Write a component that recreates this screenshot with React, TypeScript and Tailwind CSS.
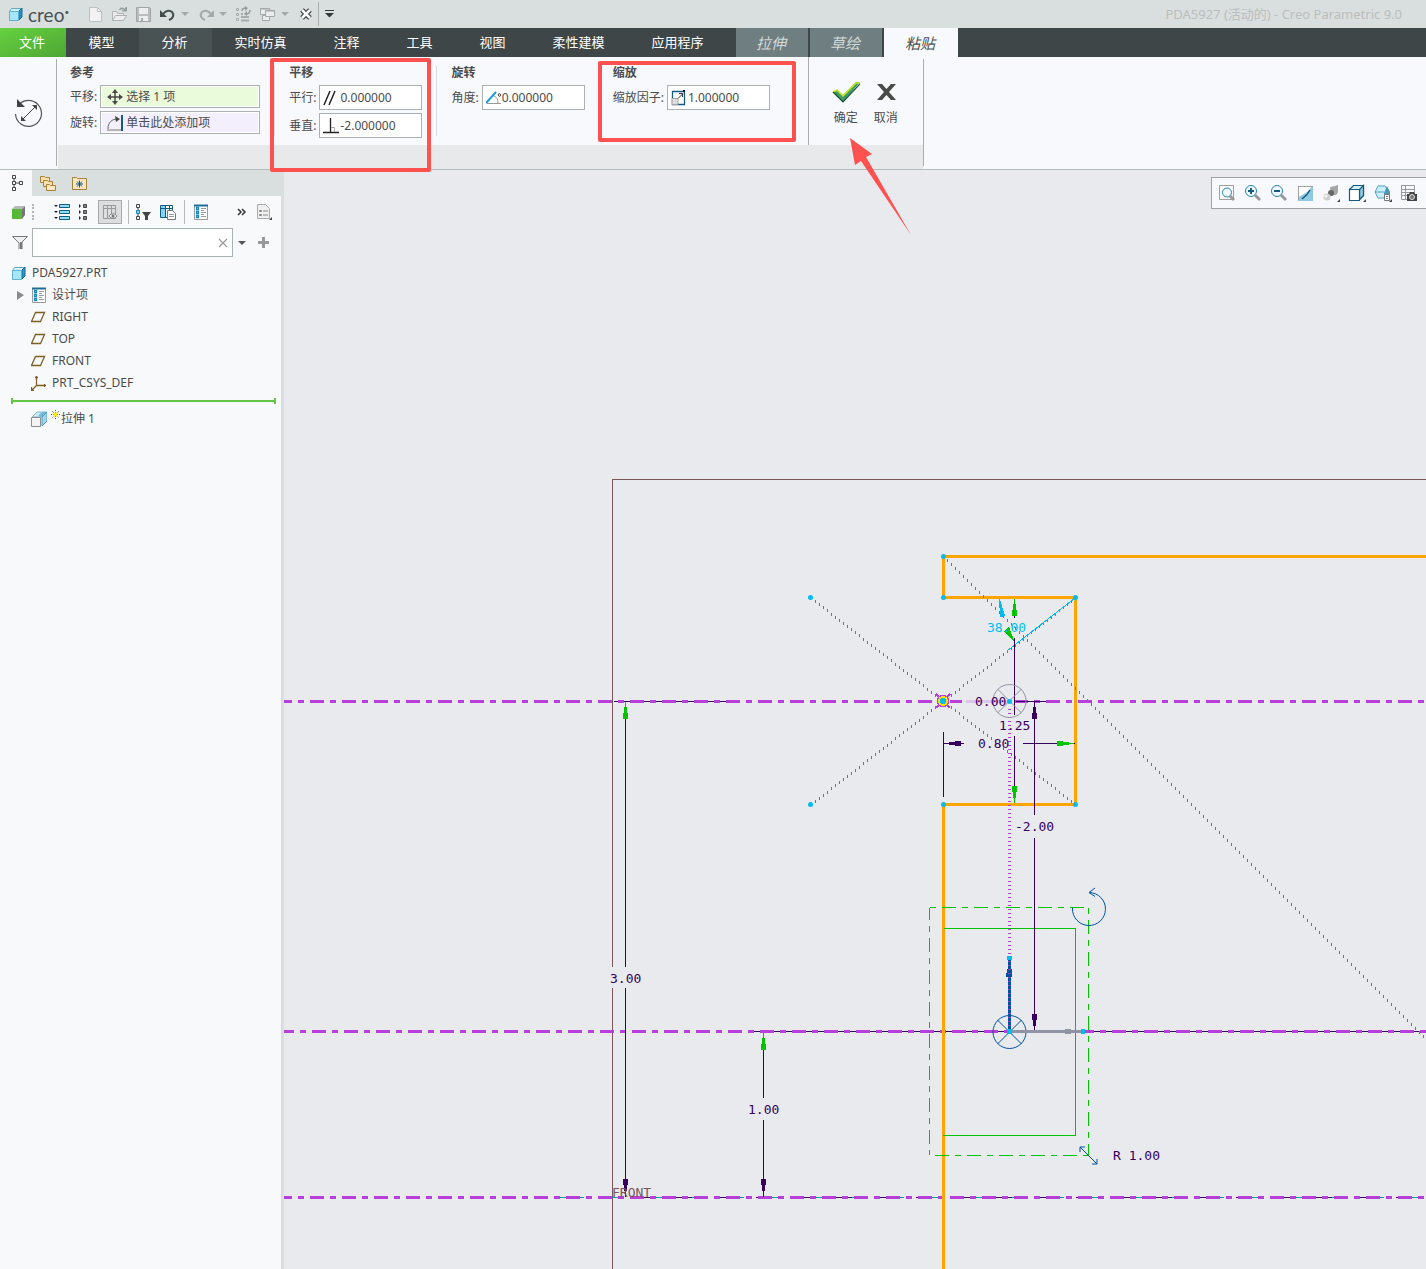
import React from "react";

interface IconProps {
  children: React.ReactNode;
  size?: number;
  className?: string;
}

const Icon: React.FC<IconProps> = ({ children, size = 16, className = "" }) => (
  <svg
    width={size}
    height={size}
    viewBox={`0 0 ${size} ${size}`}
    fill="none"
    aria-hidden="true"
    className={`shrink-0 ${className}`}
  >
    {children}
  </svg>
);

const Caret: React.FC<{ color?: string }> = ({ color = "#a3a8a8" }) => (
  <Icon size={10}>
    <path d="M1 3h8L5 7z" fill={color} />
  </Icon>
);

const PartIcon = () => (
  <Icon>
    <path d="M2.500 5.500l2-3h10l-2 3z" fill="#d5f3fd" stroke="#5fa9c9" />
    <path d="M12 5l3-3v9l-3 3z" fill="#2f93c4" stroke="#1d6a92" />
    <path d="M2.500 5.500h9v9h-9z" fill="#a6e6fb" stroke="#5fb0d2" />
  </Icon>
);

const DesignItemsIcon = () => (
  <Icon>
    <path d="M1.500 1.500h13v14h-13z" fill="#fff" stroke="#9b9b9b" />
    <path d="M1 1.500h14" stroke="#1d6f99" strokeWidth="2" />
    <path d="M3.500 3.500h2v2h-2zM3.500 7.500h2v2h-2zM3.500 11.500h2v2h-2z" stroke="#1788bd" strokeWidth="1.300" />
    <path d="M8 4.500h5M8 6.500h3M8 8.500h5M8 10.500h3M8 12.500h5" stroke="#9b9b9b" />
  </Icon>
);

const PlaneIcon = () => (
  <Icon>
    <path d="M4.500 3.500h9l-4 9h-9z" stroke="#7d6127" strokeWidth="1.300" />
  </Icon>
);

const CsysIcon = () => (
  <Icon>
    <path d="M5.500 1v9.500H15M5.500 10.500L1 15M4 2.500h3M13.500 9v3M.500 12v3.500H3" stroke="#7d6127" strokeWidth="1.300" />
  </Icon>
);

const ExtrudeIcon = () => (
  <Icon>
    <path d="M1 6l5-5h10l-5 5z" fill="#cfeaf6" stroke="#8ab7cc" />
    <path d="M7 5l4-4h5v8l-5 5V6z" fill="#6fb9da" />
    <path d="M11 6l5-5v9l-5 5z" fill="#a5d5ea" stroke="#4a9cc0" />
    <path d="M.500 6.500h9v9h-9z" fill="#f4f4f4" stroke="#8f8f8f" />
  </Icon>
);

const quickIcon = {
  file: (
    <Icon>
      <path d="M1.500 1.500h8l4 4v10h-12z" fill="#f2f2f2" stroke="#bcc0c0" />
      <path d="M9.500 1.500v4h4" stroke="#bcc0c0" />
    </Icon>
  ),
  open: (
    <Icon>
      <path d="M.500 14.500v-9h4l1 2h6v2M.500 14.500l3-5h11l-3 5z" fill="#ececec" stroke="#b0b4b4" />
      <path d="M7 4c1-2 3-3 5-1M14.500 1v4h-4z" stroke="#989c9c" fill="#989c9c" />
    </Icon>
  ),
  save: (
    <Icon>
      <path d="M.500 1.500h13l1 1v13H.500z" fill="#b9bdbd" stroke="#a0a5a5" />
      <path d="M3 2h9v6H3zM3 10h9v5H3z" fill="#eceeee" />
      <path d="M5 12h2v3H5z" fill="#a6abab" />
    </Icon>
  ),
  undo: (
    <Icon>
      <path d="M3 8c3-4 7-4 9-2s2 6-3 8" stroke="#444c4d" strokeWidth="2" />
      <path d="M0 4v7h7z" fill="#444c4d" />
    </Icon>
  ),
  redo: (
    <Icon>
      <path d="M13 8C10 4 6 4 4 6s-2 6 3 8" stroke="#a3a8a8" strokeWidth="2" />
      <path d="M16 4v7H9z" fill="#a3a8a8" />
    </Icon>
  ),
  regenerate: (
    <Icon>
      <path d="M.500 2.500h2v2h-2zM.500 7.500h2v2h-2zM.500 12.500h2v2h-2z" stroke="#a8acac" />
      <path d="M5 11h8M5 14.500h8M5 8h2" stroke="#a8acac" strokeWidth="2" />
      <path d="M6 5c0-2 1-3 4-3M14 4c0 2-1 4-4 4" stroke="#969b9b" strokeWidth="1.500" />
      <path d="M9 0l3 2-3 3zM11 5l-3 3 3 2z" fill="#969b9b" />
    </Icon>
  ),
  windows: (
    <Icon>
      <path d="M.5 2.500h9v6h-9z" fill="#eceeee" stroke="#a3a8a8" />
      <path d="M2.500 9.500h7v5h-7z" fill="#eceeee" stroke="#a3a8a8" />
      <path d="M5.500 4.500h9v6h-9z" fill="#eceeee" stroke="#a3a8a8" />
      <path d="M0 3h10M5 5h10" stroke="#a3a8a8" />
    </Icon>
  ),
  close: (
    <Icon>
      <path d="M4 4l8 8M12 4l-8 8" stroke="#3c4142" strokeWidth="5" />
      <path d="M4 4l8 8M12 4l-8 8" stroke="#fff" strokeWidth="2.500" />
    </Icon>
  ),
};

const QuickButton: React.FC<{ label: string; children: React.ReactNode }> = ({ label, children }) => (
  <button type="button" aria-label={label} className="flex items-center gap-1">
    {children}
  </button>
);

const TitleBar = () => (
  <header className="flex h-7 items-center bg-[#d9dfdf] pl-[7px]">
    <PartIcon />
    <span className="ml-[5px] w-[60px] font-['Lato',sans-serif] text-[19px] leading-none text-[#4b5152]">
      creo<span className="align-super text-[8px]">•</span>
    </span>
    <div className="flex items-center gap-2">
      <QuickButton label="新建">{quickIcon.file}</QuickButton>
      <QuickButton label="打开">{quickIcon.open}</QuickButton>
      <QuickButton label="保存">{quickIcon.save}</QuickButton>
      <QuickButton label="撤消">
        {quickIcon.undo}
        <Caret />
      </QuickButton>
      <QuickButton label="重做">
        {quickIcon.redo}
        <Caret />
      </QuickButton>
      <QuickButton label="重新生成">{quickIcon.regenerate}</QuickButton>
      <QuickButton label="窗口">
        {quickIcon.windows}
        <Caret />
      </QuickButton>
      <div className="flex items-center gap-1">
        <QuickButton label="关闭">{quickIcon.close}</QuickButton>
        <span className="h-6 w-px bg-[#a9afaf]" />
        <QuickButton label="自定义">
          <Icon size={12}>
            <path d="M2 2.500h9" stroke="#33393a" />
            <path d="M2 5h9L6.500 9.500z" fill="#33393a" />
          </Icon>
        </QuickButton>
      </div>
    </div>
    <h1 className="ml-auto pt-px pr-6 text-[13px] text-[#b9bebe]">PDA5927 (活动的) - Creo Parametric 9.0</h1>
  </header>
);

const tabs = [
  { name: "文件", style: "w-[66px] bg-linear-to-br from-[#66d140] to-[#4ea633]" },
  { name: "模型", style: "w-[73px]" },
  { name: "分析", style: "w-[73px] bg-[#4a5354]" },
  { name: "实时仿真", style: "w-[99px]" },
  { name: "注释", style: "w-[73px]" },
  { name: "工具", style: "w-[73px]" },
  { name: "视图", style: "w-[73px]" },
  { name: "柔性建模", style: "w-[99px]" },
  { name: "应用程序", style: "w-[99px]" },
  { name: "拉伸", style: "ml-2 w-[72px] bg-[#6f7e80] italic text-[#d3dada] text-[15px]" },
  { name: "草绘", style: "ml-[2px] w-[72px] bg-[#6f7e80] italic text-[#d3dada] text-[15px]" },
  { name: "粘贴", style: "ml-[2px] w-[74px] bg-[#f8f9fc] italic text-[#4b5152] text-[15px]" },
];

const TabBar = () => (
  <nav className="flex h-[29px] bg-[#3e4647] text-[13px] text-white">
    {tabs.map((tab) => (
      <button key={tab.name} type="button" className={`shrink-0 pr-[2px] ${tab.style}`}>
        {tab.name}
      </button>
    ))}
  </nav>
);

interface FieldProps {
  id: string;
  label: string;
  value: string;
  icon: React.ReactNode;
  box?: string;
}

const Field: React.FC<FieldProps> = ({ id, label, value, icon, box = "h-[25px] w-[103px] bg-white pl-[3px]" }) => (
  <div className="flex items-center gap-[3px]">
    <label htmlFor={id} className="whitespace-nowrap">
      {label}
    </label>
    <div className={`flex items-center border border-[#abb0b0] ${box}`}>
      {icon}
      <input id={id} defaultValue={value} className="w-full min-w-0 bg-transparent outline-none" />
    </div>
  </div>
);

const Separator = () => <span className="mt-[9px] h-[70px] w-px shrink-0 bg-[#d9dcdf]" />;

const Group: React.FC<{ title: string; children: React.ReactNode }> = ({ title, children }) => (
  <section className="px-[14px] pt-[7px]">
    <h2 className="mb-[3px] h-[18px] leading-[18px] font-bold">{title}</h2>
    <div className="flex flex-col gap-[3px]">{children}</div>
  </section>
);

const Ribbon = () => (
  <div className="flex h-[113px] border-b border-[#b3bcbc] bg-[#f8f9fc]">
    <div className="flex w-14 shrink-0 items-center justify-center">
      <Icon size={30}>
        <path d="M7 5.500A13 13 0 1 1 2.500 16" stroke="#555" strokeWidth="1.200" />
        <path d="M4 1v8h8z" fill="#444" />
        <path d="M10 21L22 9" stroke="#444" />
        <path d="M8 23v-5l5 5zM24 7h-5l5 5z" fill="#444" />
      </Icon>
    </div>
    <span className="mt-[2px] h-[107px] w-px shrink-0 bg-[#a9afaf]" />
    <div className="ml-px flex flex-col bg-[#e8e9eb]">
      <div className="flex h-[88px] bg-[#f8f9fc]">
        <div className="-ml-[2px] flex">
          <Group title="参考">
            <Field
              id="ref-translate"
              label="平移:"
              value="选择 1 项"
              box="h-[23px] w-40 bg-[#eafbdc] pl-[6px] shadow-[inset_0_0_0_1px_#fff]"
              icon={
                <Icon className="mr-[3px]">
                  <path d="M8 2v12M2 8h12" stroke="#4a4a4a" strokeWidth="1.500" />
                  <path d="M8 0l3 4H5zM8 16l3-4H5zM0 8l4-3v6zM16 8l-4-3v6z" fill="#4a4a4a" />
                </Icon>
              }
            />
            <Field
              id="ref-rotate"
              label="旋转:"
              value="单击此处添加项"
              box="h-[23px] w-40 bg-[#f3effd] pl-[6px] shadow-[inset_0_0_0_1px_#fff]"
              icon={
                <Icon className="mr-[3px]">
                  <path d="M1 14c0-7 4-10 10-10" stroke="#666" />
                  <path d="M8 1l5 3-4 3z" fill="#444" />
                  <path d="M0 15h14" stroke="#b5b5b5" strokeWidth="2" />
                  <path d="M15 0v16" stroke="#145b80" strokeWidth="2" />
                </Icon>
              }
            />
          </Group>
        </div>
        <Separator />
        <Group title="平移">
          <Field
            id="parallel"
            label="平行:"
            value="0.000000"
            icon={
              <Icon className="mr-px">
                <path d="M1 15L7 1M6 15l6-14" stroke="#222" strokeWidth="1.500" />
              </Icon>
            }
          />
          <Field
            id="vertical"
            label="垂直:"
            value="-2.000000"
            icon={
              <Icon className="mr-px">
                <path d="M7.500 0v15M0 14.500h16" stroke="#222" strokeWidth="1.300" />
                <path d="M8 9.500h3.500V14" stroke="#aaa" />
              </Icon>
            }
          />
        </Group>
        <Separator />
        <Group title="旋转">
          <Field
            id="angle"
            label="角度:"
            value="0.000000"
            icon={
              <Icon>
                <path d="M1 13.500h14M8 6c3 1 4 4 4 7" stroke="#999" />
                <path d="M0 13L10 2" stroke="#1f9ad6" strokeWidth="2" />
                <circle cx="13.500" cy="5" r="1.300" stroke="#444" />
              </Icon>
            }
          />
        </Group>
        <Group title="缩放">
          <Field
            id="scale"
            label="缩放因子:"
            value="1.000000"
            icon={
              <Icon className="mr-px">
                <path d="M1.500 1.500h12v13h-12z" fill="#fff" stroke="#145b80" strokeWidth="1.300" />
                <path d="M1 8.500h6v6H1z" fill="#ddd" stroke="#a5a5a5" />
                <path d="M7 8.500l5-5" stroke="#333" />
                <path d="M8 3.500h3.500V7" stroke="#333" />
                <path d="M12 0h2v2h-2z" fill="#111" />
              </Icon>
            }
          />
        </Group>
        <div className="ml-6 flex border-l border-[#a9afaf] pt-[22px] pr-[17px] pl-[17px]">
          <button type="button" className="flex w-10 flex-col items-center gap-[3px]">
            <Icon size={28}>
              <path d="M1 13l4-2 6 5L24 3h4L11 23z" fill="#3c9d66" />
              <path d="M1 13l4-2 6 6L24 4h4" stroke="#c9e81c" strokeWidth="1.500" />
              <path d="M1 13l10 10L28 5" stroke="#174f2d" strokeWidth="1.200" />
            </Icon>
            <span>确定</span>
          </button>
          <button type="button" className="flex w-10 flex-col items-center gap-[3px]">
            <Icon size={28}>
              <path d="M5 5h5l4.500 5L19 5h5l-7 8 7 8h-5l-4.500-5-4.500 5H5l7-8z" fill="#4a4a4a" />
            </Icon>
            <span>取消</span>
          </button>
        </div>
      </div>
    </div>
    <span className="mt-[2px] h-[107px] w-px shrink-0 bg-[#a9afaf]" />
  </div>
);

const treeItems = [
  { name: "RIGHT", icon: <PlaneIcon /> },
  { name: "TOP", icon: <PlaneIcon /> },
  { name: "FRONT", icon: <PlaneIcon /> },
  { name: "PRT_CSYS_DEF", icon: <CsysIcon /> },
];

const Divider = () => <span className="h-6 w-px bg-[#b5b9b9]" />;

const Sidebar = () => (
  <aside className="w-[284px] shrink-0 border-r-3 border-[#d9dfdf] bg-[#f7f9fb]">
    <div className="flex h-[26px] bg-[#d9dfdf]">
      <button type="button" aria-label="模型树" className="flex w-8 items-center justify-center bg-[#f7f9fb]">
        <Icon className="ml-1">
          <path d="M2.500 .500h3v3h-3zM2.500 6.500h3v3h-3zM2.500 12.500h3v3h-3zM9.500 6.500h3v3h-3zM4 4v2M4 10v2M6 8h3" stroke="#444" />
        </Icon>
      </button>
      <button type="button" aria-label="文件夹浏览器" className="flex w-8 items-center justify-center">
        <Icon>
          <path d="M.5 1.500h4l1 1h4v5h-9z" fill="#f9deb0" stroke="#a98235" />
          <path d="M3.500 5.500h4l1 1h4v5h-9z" fill="#f9deb0" stroke="#a98235" />
          <path d="M6.500 9.500h3l1 1h5v5h-9z" fill="#fbe7c4" stroke="#a98235" />
        </Icon>
      </button>
      <button type="button" aria-label="收藏夹" className="flex w-8 items-center justify-center">
        <Icon>
          <path d="M.500 14.500v-12h4l1 1h9v11z" fill="#fbe7c4" stroke="#a98235" />
          <path d="M7.500 5.500v7M4 9h7M5 6.500l5 5M10 6.500l-5 5" stroke="#145b80" />
        </Icon>
      </button>
    </div>

    <div className="flex h-8 items-center pl-[10px]">
      <Icon>
        <path d="M2 5l3-3h10l-3 3z" fill="#b8b8b8" />
        <path d="M12 5l3-3v9l-3 4z" fill="#777" />
        <path d="M2 5h10v10H2z" fill="#57b83a" />
      </Icon>
      <span className="ml-[6px] h-4 border-l-2 border-dotted border-[#b5b5b5]" />
      <div className="ml-5 flex items-center gap-[6px]">
        <button type="button" aria-label="展开">
          <Icon>
            <path d="M5.500 .500h10v3h-10zM5.500 6.500h10v3h-10zM5.500 12.500h10v3h-10z" fill="#8fdcf8" stroke="#145b80" />
            <path d="M0 1h4L2 3zM0 7h4L2 9zM0 13h4l-2 2z" fill="#222" />
          </Icon>
        </button>
        <button type="button" aria-label="收缩">
          <Icon>
            <path d="M7.500 .500h3v3h-3zM7.500 6.500h3v3h-3zM7.500 12.500h3v3h-3z" fill="#888" stroke="#444" />
            <path d="M3 0l2 2-2 2zM3 6l2 2-2 2zM3 12l2 2-2 2z" fill="#222" />
          </Icon>
        </button>
        <button
          type="button"
          aria-label="显示列"
          className="flex size-6 items-center justify-center border border-[#a9a9a9] bg-[#dcdde0]"
        >
          <Icon>
            <path d="M1.500 1.500h12v13h-12zM1 4.500h13M5.500 1v13M9.500 1v9" stroke="#999" />
            <path d="M7 12c2-3 6-3 8 0-2 3-6 3-8 0z" fill="#eee" stroke="#888" />
            <circle cx="11" cy="12" r="1.500" fill="#777" />
          </Icon>
        </button>
        <Divider />
      </div>
      <div className="ml-[5px] flex items-center gap-2">
        <button type="button" aria-label="树过滤器">
          <Icon size={18}>
            <path d="M2.500 1.500h3v3h-3zM2.500 13.500h3v3h-3zM4 5v2M4 11v2" stroke="#444" />
            <path d="M2.500 7.500h3v3h-3z" fill="#7fd4f5" stroke="#1788bd" />
            <path d="M8 9h9l-3 4v4h-3v-4z" fill="#444" />
          </Icon>
        </button>
        <button type="button" aria-label="树列">
          <Icon>
            <path d="M.5 1.500h12v12H.500z" fill="#fff" stroke="#145b80" />
            <path d="M1 2h4v11H1z" fill="#7fd4f5" />
            <path d="M0 4.500h13M5.500 1v12M9.500 1v5" stroke="#145b80" />
            <path d="M7.500 6.500h5l3 3v6h-8z" fill="#fff" stroke="#777" />
            <path d="M9 10.500h5M9 12.500h5" stroke="#999" />
          </Icon>
        </button>
        <Divider />
        <button type="button" aria-label="设计项">
          <DesignItemsIcon />
        </button>
      </div>
      <div className="ml-auto flex items-center gap-2 pr-2">
        <button type="button" aria-label="更多">
          <Icon size={12}>
            <path d="M3 3l3 3-3 3M7 3l3 3-3 3" stroke="#333" strokeWidth="1.500" />
          </Icon>
        </button>
        <button type="button" aria-label="设置">
          <Icon size={18}>
            <path d="M2.500 1.500h8l4 4v10h-12z" fill="#f0f0f0" stroke="#aaa" />
            <path d="M4.500 7.500h2v1h-2zM4.500 11.500h2v1h-2zM8 8h5M8 12h5" stroke="#888" />
            <path d="M17 14v3h-3z" fill="#444" />
          </Icon>
        </button>
      </div>
    </div>

    <div className="flex h-[29px] items-center">
      <Icon className="ml-3">
        <path d="M1 1h15L10 8v7l-3-2V8z" fill="#f0f0f0" />
        <path d="M.5 1.500h15L10 7v7M.500 1.500L7 8v6" stroke="#777" />
        <path d="M9 7v7" stroke="#777" strokeWidth="2" />
      </Icon>
      <div className="ml-1 flex h-full w-[201px] items-center border border-[#a9b3b3] bg-white pr-1">
        <input aria-label="树搜索" className="h-full min-w-0 flex-1 px-1 outline-none" />
        <button type="button" aria-label="清除">
          <Icon size={10}>
            <path d="M1 1l8 8M9 1L1 9" stroke="#9a9a9a" strokeWidth="1.200" />
          </Icon>
        </button>
      </div>
      <button type="button" aria-label="搜索选项" className="ml-1">
        <Caret color="#555" />
      </button>
      <button type="button" aria-label="添加" className="ml-[11px]">
        <Icon size={12}>
          <path d="M5.500 0v11M0 5.500h11" stroke="#999" strokeWidth="3" />
        </Icon>
      </button>
    </div>

    <ul className="pt-[5px] leading-[22px]">
      <li className="flex items-center gap-[6px] pl-[10px]">
        <PartIcon />
        PDA5927.PRT
      </li>
      <li className="flex items-center pl-[15px]">
        <Icon>
          <path d="M2 4l7 4-7 5z" fill="#8a8a8a" />
        </Icon>
        <DesignItemsIcon />
        <span className="pl-[5px]">设计项</span>
      </li>
      {treeItems.map((item) => (
        <li key={item.name} className="flex items-center gap-[5px] pl-[31px]">
          {item.icon}
          {item.name}
        </li>
      ))}
      <li className="mr-[5px] mt-1 ml-[11px] flex h-[6px] items-center border-x-2 border-[#63c644]">
        <span className="h-[2px] w-full bg-[#63c644]" />
      </li>
      <li className="flex items-center pt-1 pl-[31px]">
        <ExtrudeIcon />
        <Icon size={10} className="mb-2 ml-1">
          <path d="M4.500 0v9M0 4.500h9M1 1l7 7M8 1L1 8" stroke="#555" strokeDasharray="1 1" />
          <path d="M2.500 2.500h4v4h-4z" fill="#ffee00" />
        </Icon>
        拉伸 1
      </li>
    </ul>
  </aside>
);

const viewTools = [
  {
    name: "重新调整",
    art: (
      <>
        <path d="M1.500 1.500h14v14h-14z" stroke="#a0a0a0" />
        <path d="M12 12l4 4" stroke="#999" strokeWidth="3" />
        <circle cx="9" cy="8.500" r="4.500" fill="#eefaff" stroke="#2a83ab" />
      </>
    ),
  },
  {
    name: "放大",
    art: (
      <>
        <path d="M11 11l5 5" stroke="#999" strokeWidth="3" />
        <circle cx="7" cy="7" r="5.500" fill="#eefaff" stroke="#2a83ab" />
        <path d="M7 4v6M4 7h6" stroke="#145b80" strokeWidth="2" />
      </>
    ),
  },
  {
    name: "缩小",
    art: (
      <>
        <path d="M11 11l5 5" stroke="#999" strokeWidth="3" />
        <circle cx="7" cy="7" r="5.500" fill="#eefaff" stroke="#2a83ab" />
        <path d="M4 7h6" stroke="#145b80" strokeWidth="2" />
      </>
    ),
  },
  {
    name: "重画",
    art: (
      <>
        <path d="M2 2h15v15H2z" fill="#8fcbe0" />
        <path d="M2 3h13c-2 5-7 7-13 10z" fill="#fff" />
        <path d="M2.500 16V2.500H17" stroke="#a0a0a0" />
        <path d="M6 15c4-3 6-5 8-9" stroke="#145b80" strokeWidth="1.500" />
      </>
    ),
  },
  {
    name: "显示样式",
    art: (
      <>
        <path d="M8 4c0-2 4-1 8-3v6c0 4-3 5-7 4z" fill="#a5a5a5" />
        <circle cx="9" cy="9" r="3" fill="#666" />
        <circle cx="5" cy="13" r="3.500" fill="#cfcfcf" />
        <circle cx="4" cy="12" r="1.500" fill="#f5f5f5" />
        <path d="M18 15v3h-3z" fill="#444" />
      </>
    ),
  },
  {
    name: "已保存方向",
    art: (
      <>
        <path d="M1.500 5.500l4-4h10v10l-4 4" fill="#d5f0fb" stroke="#145b80" strokeWidth="1.200" />
        <path d="M11.500 5.500l4-4v10l-4 4z" fill="#8fcbe0" stroke="#145b80" strokeWidth="1.200" />
        <path d="M1.500 5.500h10v11h-10z" fill="#fff" stroke="#145b80" strokeWidth="1.200" />
        <path d="M18 15v3h-3z" fill="#444" />
      </>
    ),
  },
  {
    name: "视图管理器",
    art: (
      <>
        <path d="M1 8l3-6h7l4 5v7H4z" fill="#cdeefa" stroke="#4aa3c8" />
        <path d="M1 8h9" stroke="#4aa3c8" />
        <path d="M10 9l3-7 3 6v5h-6z" fill="#4a98bb" />
        <path d="M10.500 10.500h5v6h-5z" fill="#fff" stroke="#777" />
        <path d="M12 12.500h2M12 14.500h2" stroke="#777" />
        <path d="M18 15v3h-3z" fill="#444" />
      </>
    ),
  },
  {
    name: "捕获",
    art: (
      <>
        <path d="M1.500 1.500h13v14h-13zM1 5.500h14M1 8.500h14M1 11.500h8M5.500 2v13" stroke="#999" />
        <path d="M7 10h2l1-2h4l1 2h2v7H7z" fill="#444" />
        <circle cx="12" cy="13" r="2.500" fill="#777" stroke="#ddd" />
      </>
    ),
  },
];

const ViewToolbar = () => (
  <div className="absolute top-[7px] right-0 flex h-8 items-center border border-r-0 border-[#9fa3a6] bg-[#f8f9fc] pr-1 pl-[2px]">
    {viewTools.map((tool) => (
      <button key={tool.name} type="button" aria-label={tool.name} className="flex w-[26px] justify-center">
        <Icon size={18}>{tool.art}</Icon>
      </button>
    ))}
  </div>
);

// Construction lines are rasterised as short vertical ticks, one every 4px
const ticks = (x1: number, y1: number, x2: number, y2: number) => {
  let d = "";
  for (let x = x1 + 4; x < x2; x += 4) {
    const y = Math.round(y1 + ((y2 - y1) * (x - x1)) / (x2 - x1));
    d += `M${x + 0.5} ${y - 1}v3`;
  }
  return d;
};

const Arrow: React.FC<{ x: number; y: number; turn: number; color: string }> = ({ x, y, turn, color }) => (
  <path
    d="M-.5 0h1v5h1v6h1v6h-5v-6h1v-6h1z"
    transform={`translate(${x} ${y}) rotate(${turn})`}
    fill={color}
  />
);

const points = [
  [943, 556],
  [943, 597],
  [1075, 597],
  [1075, 804],
  [943, 804],
  [810, 597],
  [810, 804],
  [1009, 701],
];

const labels = [
  { text: "3.00", x: 610, y: 983 },
  { text: "1.00", x: 748, y: 1114 },
  { text: "0.00", x: 975, y: 706 },
  { text: "1.25", x: 999, y: 730 },
  { text: "0.80", x: 978, y: 748 },
  { text: "-2.00", x: 1015, y: 831 },
  { text: "R 1.00", x: 1113, y: 1160 },
];

const ink = "#37005f";
const green = "#00c400";
const violet = "#b93fdb";
const blue = "#0053a0";
const cyan = "#00bdee";
const brown = "#7b5557";

const Sketch = () => (
  <svg className="absolute inset-0 size-full" shapeRendering="crispEdges" fill="none">
    <g transform="translate(-284 -170)">
      <path d="M4000 479.500H612.500V967M612.500 988V4000" stroke={brown} />
      <path d="M560 1197.500H4000" stroke="#00a0a0" strokeDasharray="24 16" />
      <path d="M636 1197.500H4000" stroke={ink} strokeDasharray="16 24" />
      <path d="M614 701.500H740M754 1031.500H4000" stroke={ink} />

      <g stroke={violet} strokeWidth="3" strokeDasharray="14 6 6 6">
        <path d="M284 701.500H962" strokeDashoffset="6" />
        <path d="M1014 701.500H4000" strokeDashoffset="0" />
        <path d="M284 1031.500H4000" strokeDashoffset="4" />
        <path d="M284 1197.500H4000" strokeDashoffset="6" />
      </g>
      <path d="M966 701.500H1008" stroke="#dcc5ea" strokeWidth="3" />

      <path d="M4000 556.500H943.500V597.500H1075.500V804.500H943.500V4000" stroke="#ffa500" strokeWidth="3" />

      <g stroke={violet}>
        <path d={ticks(811, 598, 1075, 804)} />
        <path d={ticks(811, 804, 1075, 598)} />
        <path d={ticks(943, 556, 1426, 1039)} />
        <path d="M1009.500 709V958" strokeWidth="3" strokeDasharray="1 3" />
      </g>
      <path d="M1007 651L1075 598" stroke={cyan} />

      <g stroke={green}>
        <path d="M944 928.500H1075.500V1135.500H943" />
        <path d="M930 907.500H1088" strokeDasharray="14 6 6 6" strokeDashoffset="20" />
        <path d="M1088.500 908V1155" strokeDasharray="14 6 6 6" strokeDashoffset="20" />
        <path d="M929 1155.500H1088" strokeDasharray="14 6 6 6" strokeDashoffset="26" />
        <path d="M929.500 908V1155" strokeDasharray="14 6 6 6" strokeDashoffset="2" />
      </g>

      <g stroke={ink}>
        <path d="M625.500 702V967M625.500 988V1197" />
        <path d="M763.500 1033V1098M763.500 1120V1197" />
        <path d="M1014.500 638V715M1014.500 736V803M1014.500 599V618" />
        <path d="M1034.500 702V815M1034.500 838V1031" />
        <path d="M943.500 732V797M944 743.500H964M1023 743.500H1075M1016 701.500H1046" />
      </g>
      <Arrow x={625.5} y={702} turn={0} color={green} />
      <Arrow x={625.5} y={1196} turn={180} color={ink} />
      <Arrow x={763.5} y={1033} turn={0} color={green} />
      <Arrow x={763.5} y={1196} turn={180} color={ink} />
      <Arrow x={1014.5} y={599} turn={0} color={green} />
      <Arrow x={1014.5} y={803} turn={180} color={green} />
      <Arrow x={1034.5} y={702} turn={0} color={ink} />
      <Arrow x={1034.5} y={1031} turn={180} color={ink} />
      <Arrow x={944} y={743.5} turn={-90} color={ink} />
      <Arrow x={1074} y={743.5} turn={90} color={green} />
      <path d="M999 599h1l5 17-5 1z" fill={cyan} />
      <path d="M1015 643l-11-12 5-4z" fill={green} />

      <g shapeRendering="auto">
        <circle cx="1009.500" cy="701" r="16.500" stroke="#8f93a3" />
        <path d="M997.500 689l24 24M1021.500 689l-24 24" stroke="#8f93a3" />
        <circle cx="1009.500" cy="1032" r="16.500" stroke={blue} />
        <path d="M997.500 1020l24 24M1021.500 1020l-24 24" stroke={blue} />
        <path d="M1072.500 908A16.500 16.500 0 1 0 1089 892.500M1095 888l-6 4.500 6 4" stroke={blue} />
        <path d="M1080 1147l17 17M1080 1152v-5h5M1097 1159v5h-5" stroke={blue} />
      </g>

      <path d="M1009.500 958V1031" stroke={blue} strokeWidth="3" />
      <path d="M1007 969h5v8h-6z" fill={blue} />
      <path d="M1009.500 961V1030" stroke={violet} strokeWidth="3" strokeDasharray="1 3" opacity="0.7" />
      <path d="M1010 1031.500H1083" stroke="#8f93a3" strokeWidth="3" />
      <path d="M1065 1029h4l4 1v3l-4 1h-4z" fill="#8f93a3" />

      <g fill={cyan}>
        {points.map(([x, y]) => (
          <circle key={`${x}-${y}`} cx={x + 0.5} cy={y + 0.5} r="2.500" shapeRendering="auto" />
        ))}
        <path d="M1007 956h5v4h-5zM1007 1029h5v5h-5zM1081 1029h4v5h-4z" />
      </g>

      <path d="M936 694l14 14M950 694l-14 14" stroke={violet} strokeWidth="2" />
      <circle cx="943" cy="701" r="5.500" stroke={violet} strokeWidth="2" />
      <circle cx="943" cy="701" r="4" fill={cyan} stroke="#ffe100" strokeWidth="2" />

      <g className="font-['DejaVu_Sans_Mono',monospace] text-[13px]" fill={ink}>
        {labels.map((label) => (
          <text key={label.text} x={label.x} y={label.y}>
            {label.text}
          </text>
        ))}
        <text x="987" y="632" fill={cyan}>
          38.00
        </text>
        <text x="612" y="1197" fill={brown}>
          FRONT
        </text>
      </g>
    </g>
  </svg>
);

const Markup = () => (
  <svg className="pointer-events-none absolute top-0 left-0 h-60 w-[960px]" fill="none">
    <path d="M272 60h157v110H272zM600 63h194v77H600z" stroke="#fe5150" strokeWidth="4" strokeLinejoin="round" />
    <path d="M850 138l22 16-6 3 45 78-50-74-6 4z" fill="#fe5150" />
  </svg>
);

const App = () => (
  <div className="relative flex min-h-screen flex-col overflow-hidden font-['Noto_Sans','Noto_Sans_CJK_SC',sans-serif] text-xs text-[#4b4b4b]">
    <TitleBar />
    <TabBar />
    <Ribbon />
    <div className="flex flex-1">
      <Sidebar />
      <main className="relative flex-1 overflow-hidden bg-[#e8eaee]">
        <Sketch />
        <ViewToolbar />
      </main>
    </div>
    <Markup />
  </div>
);

export default App;
